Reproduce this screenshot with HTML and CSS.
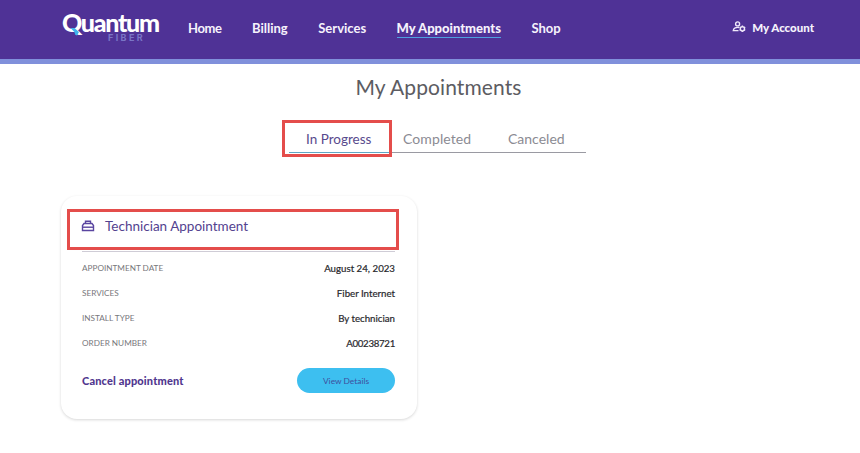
FILE: index.html
```html
<!DOCTYPE html>
<html lang="en">
<head>
  <meta charset="UTF-8" />
  <meta name="viewport" content="width=device-width, initial-scale=1" />
  <title>My Appointments - Quantum Fiber</title>
  <link rel="stylesheet" href="styles.css">
</head>
<body>

  <header class="header">
    <a class="logo">
      <span class="logo-name">Quantum</span>
      <span class="logo-sub">FIBER</span>
      <svg class="logo-tail" viewBox="0 0 10 9">
        <path d="M0.5 1 L4.5 1 L9 5 L7 8.5 L5.2 7.8 L4.4 5 Z" fill="#3fb4ee" />
      </svg>
    </a>
    <nav class="nav">
      <a class="nav-home">Home</a>
      <a class="nav-billing">Billing</a>
      <a class="nav-services">Services</a>
      <a class="nav-current">My Appointments</a>
      <a class="nav-shop">Shop</a>
    </nav>
    <a class="account">
      <svg class="account-icon" viewBox="0 0 14 12" fill="none" stroke="#efe9fa" stroke-width="1.4">
        <circle cx="5.6" cy="2.9" r="2" />
        <path d="M7 6.5 C4 6 1.6 7.2 1.3 9.6 H6.5" />
        <circle cx="10.4" cy="7.8" r="2.1" />
        <path d="M10.4 4.6 V5.7 M10.4 9.9 V11 M7.6 6.2 L8.5 6.7 M12.3 8.9 L13.2 9.4 M13.2 6.2 L12.3 6.7 M7.6 9.4 L8.5 8.9" />
      </svg>
      My Account
    </a>
  </header>

  <main>
    <h1>My Appointments</h1>

    <div class="tabs">
      <div class="tab active"><span>In Progress</span></div>
      <div class="tab completed"><span>Completed</span></div>
      <div class="tab canceled"><span>Canceled</span></div>
    </div>

    <section class="card">
      <h2 class="card-title">
        <svg class="toolbox" viewBox="0 0 14 12" fill="none" stroke="#5a45a0" stroke-width="1.4">
          <path d="M4.5 3.4 V1.2 H9.5 V3.4" />
          <path d="M1.5 10.5 V5.5 L3 3.5 H11 L12.5 5.5 V10.5 Z" />
          <path d="M1.5 7.2 H12.5" />
        </svg>
        <span>Technician Appointment</span>
      </h2>
      <dl class="details">
        <div class="row"><dt>APPOINTMENT DATE</dt><dd>August 24, 2023</dd></div>
        <div class="row"><dt>SERVICES</dt><dd>Fiber Internet</dd></div>
        <div class="row"><dt>INSTALL TYPE</dt><dd>By technician</dd></div>
        <div class="row"><dt>ORDER NUMBER</dt><dd class="order">A00238721</dd></div>
      </dl>
      <div class="actions">
        <a class="cancel">Cancel appointment</a>
        <button>View Details</button>
      </div>
    </section>
  </main>

</body>
</html>
```
FILE: styles.css
```css
* {
  box-sizing: border-box;
}
body {
  font-family: Lato, sans-serif;
  background-color: #ffffff;
  margin: 0;
  min-height: 453px;
  white-space: nowrap;
}
.header {
  display: flex;
  height: 64px;
  padding: 0 46px 0 62px;
  background-color: #4f3296;
  border-bottom: 5px solid #8090db;
  color: #f6f2fc;
}
.logo {
  position: relative;
  width: 126px;
  padding-top: 11px;
}
.logo-name {
  display: block;
  font-size: 25px;
  line-height: 22px;
  font-weight: 900;
  letter-spacing: -1.3px;
  color: #ffffff;
}
.logo-sub {
  position: absolute;
  left: 46px;
  top: 34px;
  font: bold 9px/8px Inter, sans-serif;
  letter-spacing: 2.4px;
  color: #7a76c6;
}
.logo-tail {
  position: absolute;
  left: 8px;
  top: 27px;
  width: 10px;
  height: 9px;
}
.nav {
  display: flex;
  gap: 30.5px;
  padding-top: 20px;
  font-size: 13px;
  line-height: 16px;
  font-weight: bold;
}
.nav-home {
  letter-spacing: -0.4px;
}
.nav-current {
  height: 18px;
  font-weight: 900;
  border-bottom: 1px solid #4f9fe0;
}
.account {
  display: flex;
  margin-left: auto;
  padding-top: 20px;
  font-size: 11.5px;
  line-height: 16px;
  font-weight: 900;
}
.account-icon {
  width: 14px;
  height: 12px;
  margin: 1px 6px 0 0;
}
h1 {
  margin: 9px 0 0 17px;
  font-size: 21px;
  line-height: 28px;
  font-weight: normal;
  letter-spacing: 0.1px;
  text-align: center;
  color: #5c5c62;
}
.tabs {
  display: flex;
  width: 304px;
  height: 37px;
  margin: 19px 0 0 282px;
  font-size: 14px;
  line-height: 18px;
  color: #8b8b93;
}
.tab {
  height: 33px;
  padding-top: 10px;
  border-bottom: 1px solid #9a9aa2;
}
.tab.active {
  width: 110px;
  height: 37px;
  padding: 7px 0 0 21px;
  border: 3px solid #e44d4b;
  color: #584a8d;
  font-size: 13.5px;
  background: linear-gradient(#5fa6c4, #5fa6c4) 4px 29px / 100px 1px no-repeat;
}
.completed {
  width: 104px;
  padding-left: 11px;
  letter-spacing: 0.1px;
}
.canceled {
  width: 90px;
  padding-left: 12px;
}
.card {
  width: 356px;
  height: 223px;
  margin: 39px 0 0 61px;
  padding: 13px 18px 0 6px;
  border-radius: 16px;
  box-shadow: 0 1px 3px rgba(0, 0, 0, 0.16);
}
.card-title {
  display: flex;
  width: 332px;
  height: 41px;
  margin: 0;
  padding: 5px 0 0 11px;
  border: 3px solid #e44d4b;
  font-size: 13.5px;
  line-height: 18px;
  font-weight: normal;
  color: #53428f;
}
.toolbox {
  width: 14px;
  height: 12px;
  margin: 3px 10px 0 0;
}
.details {
  margin: 1px 4px 0 15px;
  padding-top: 4px;
  border-top: 1px solid #cfccd6;
}
.row {
  display: flex;
  justify-content: space-between;
  height: 25px;
  line-height: 25px;
}
dt {
  font-size: 8.2px;
  color: #77777b;
}
dd {
  margin: 0;
  font-size: 9.7px;
  color: #28282c;
  -webkit-text-stroke: 0.2px #28282c;
}
.order {
  letter-spacing: -0.3px;
}
.actions {
  display: flex;
  align-items: center;
  justify-content: space-between;
  margin: 12px 4px 0 15px;
}
.cancel {
  font-size: 11px;
  font-weight: 900;
  letter-spacing: 0.15px;
  color: #51378f;
}
button {
  width: 98px;
  height: 25px;
  padding: 0;
  border: none;
  border-radius: 13px;
  background-color: #3dbff0;
  color: #3f4f9e;
  font: 8.4px Lato, sans-serif;
}
```
